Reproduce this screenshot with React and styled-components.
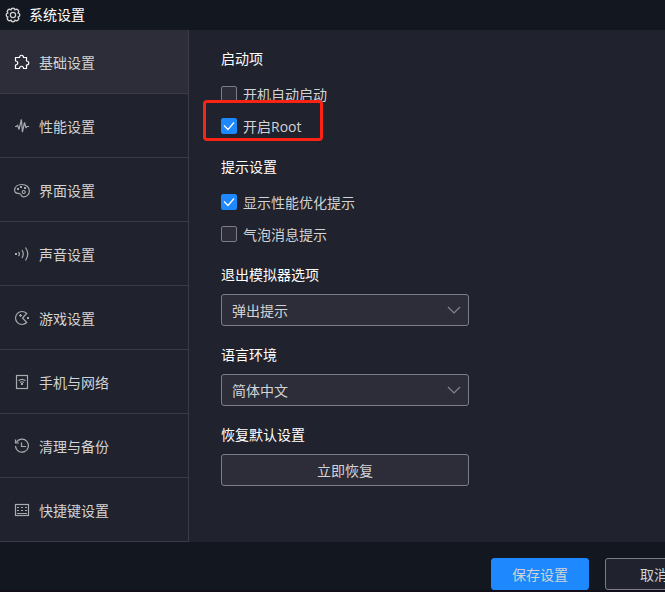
import styled, { createGlobalStyle } from "styled-components";
import { useState } from "react";

const GlobalStyle = createGlobalStyle`
  * {
    box-sizing: border-box;
  }
  body {
    margin: 0;
    background-color: #20222d;
    color: #d2d3d5;
    font-family: "Open Sans", "Noto Sans CJK SC", sans-serif;
    font-size: 14px;
    line-height: 20px;
  }
  button,
  select,
  input {
    margin: 0;
    font: inherit;
    color: inherit;
  }
`;

const Page = styled.div`
  display: flex;
  flex-direction: column;
  min-height: 100vh;
  overflow: hidden;
`;

const TitleBar = styled.header`
  display: flex;
  align-items: center;
  gap: 8px;
  height: 30px;
  padding: 0 5px 1px;
  background-color: #131720;
  color: #ffffff;
  h1 {
    margin: 0;
    font-size: 14px;
    font-weight: 400;
  }
`;

const Icon = styled.svg`
  flex: none;
  width: 16px;
  height: 16px;
  fill: none;
  stroke: ${(props) => props.$color || "#a9aaae"};
  stroke-width: 1.2;
  .solid {
    fill: ${(props) => props.$color || "#a9aaae"};
    stroke: none;
  }
`;

const Body = styled.div`
  display: flex;
  flex: 1;
`;

const Sidebar = styled.nav`
  flex: none;
  width: 189px;
  border-right: 1px solid #3a3b46;
`;

const NavItem = styled.button`
  display: flex;
  align-items: center;
  gap: 9px;
  width: 100%;
  height: 64px;
  padding: 1px 14px 0;
  border: none;
  border-bottom: 1px solid #3a3b46;
  background-color: ${(props) => (props.$active ? "#2c2d38" : "transparent")};
  text-align: left;
  cursor: pointer;
`;

const Label = styled.span`
  padding-top: 2px;
`;

const Content = styled.main`
  display: flex;
  flex: 1;
  flex-direction: column;
  align-items: flex-start;
  gap: 19px;
  padding: 19px 32px;
`;

const Group = styled.section`
  display: flex;
  flex-direction: column;
  gap: ${(props) => props.$gap || 9}px;
  width: 100%;
  max-width: 248px;
  h2 {
    margin: 0;
    color: #ffffff;
    font-size: 14px;
    font-weight: 400;
  }
`;

const CheckList = styled.div`
  display: flex;
  flex-direction: column;
  align-items: flex-start;
  gap: 8px;
`;

const CheckRow = styled.label`
  display: flex;
  align-items: center;
  gap: 6px;
  height: 24px;
  position: relative;
  cursor: pointer;
`;

const CheckBox = styled.span`
  display: grid;
  width: 16px;
  height: 16px;
  input,
  svg {
    grid-area: 1 / 1;
  }
  input {
    appearance: none;
    width: 16px;
    height: 16px;
    border: 1px solid #7c7d86;
    border-radius: 2px;
    background-color: #2c2d38;
  }
  input:checked {
    border-color: #1e88ff;
    background-color: #1e88ff;
  }
  svg {
    visibility: hidden;
    pointer-events: none;
  }
  input:checked + svg {
    visibility: visible;
  }
`;

const Marker = styled.span`
  position: absolute;
  top: -14px;
  left: -18px;
  width: 120px;
  height: 41px;
  border: 3px solid #fb2314;
  border-radius: 4px;
  pointer-events: none;
`;

const SelectBox = styled.div`
  display: grid;
  align-items: center;
  select,
  svg {
    grid-area: 1 / 1;
  }
  select {
    appearance: none;
    width: 100%;
    height: 32px;
    padding: 2px 10px 0;
    border: 1px solid #7c7d86;
    border-radius: 3px;
    background-color: #2c2d38;
  }
  svg {
    justify-self: end;
    margin-right: 7px;
    pointer-events: none;
  }
`;

const Button = styled.button`
  flex: none;
  width: ${(props) => props.$width || "100%"};
  height: 32px;
  padding: 2px 0 0;
  border: 1px solid ${(props) => (props.$primary ? "#1e88ff" : "#7c7d86")};
  border-radius: 3px;
  background-color: ${(props) => (props.$primary ? "#1e88ff" : props.$dark ? "#20222d" : "#2c2d38")};
  cursor: pointer;
`;

// the last button runs past the right edge of the window
const Footer = styled.footer`
  display: flex;
  justify-content: flex-end;
  gap: 16px;
  padding-top: 16px;
  margin-right: -38px;
  border-bottom: 2px solid #120e1a;
  background-color: #131720;
`;

const GearIcon = () => (
  <Icon viewBox="0 0 16 16" $color="#d2d3d5" aria-hidden="true">
    <path
      strokeWidth="1.4"
      d="M13.2 5.9A2.2 2.2 0 0 1 13.2 10.1A2.2 2.2 0 0 1 10.1 13.2A2.2 2.2 0 0 1 5.9 13.2A2.2 2.2 0 0 1 2.8 10.1A2.2 2.2 0 0 1 2.8 5.9A2.2 2.2 0 0 1 5.9 2.8A2.2 2.2 0 0 1 10.1 2.8A2.2 2.2 0 0 1 13.2 5.9Z"
    />
    <circle cx="8" cy="8" r="2.6" />
  </Icon>
);

const navItems = [
  {
    name: "基础设置",
    icon: (
      <path d="M1.5 3.5H5.5C5.5.5 9.5.5 9.5 3.5H12.5V7C15.5 7 15.5 11 12.5 11V14.5H9.5C9.5 11.5 5.5 11.5 5.5 14.5H1.5V11C4.5 11 4.5 7 1.5 7Z" />
    ),
  },
  {
    name: "性能设置",
    icon: (
      <path
        strokeLinejoin="bevel"
        d="M1 8.5h1.5L3.5 7 5 11.5 7.4 1.5 8.4 14 10.5 4.5 12 10 13 8.5H15"
      />
    ),
  },
  {
    name: "界面设置",
    icon: (
      <>
        <path d="M.6 8.5C.6 4.5 4 2.5 8 2.5S15.4 5 15.4 9s-3 5.8-6 5.8c-2.5 0-1.7-2.3-3.5-3S.7 12 .6 8.5Z" />
        <circle cx="9.7" cy="10" r="1.5" />
        <rect className="solid" x="3" y="6" width="2" height="2" />
        <rect className="solid" x="6" y="4" width="2" height="2" />
        <rect className="solid" x="10" y="5" width="2" height="2" />
      </>
    ),
  },
  {
    name: "声音设置",
    icon: (
      <>
        <rect className="solid" x="1" y="7" width="2" height="2" />
        <path d="M4.5 6q1.8 2 0 4M8 4q2.5 4 0 8M11.5 1.5q4.5 6.5 0 13" />
      </>
    ),
  },
  {
    name: "游戏设置",
    icon: (
      <>
        <path d="M12.7 3.5A6.5 6.5 0 1 0 12.7 12.5L8.5 8Z" />
        <path d="M6.5 4v3M5 5.5h3" />
        <rect className="solid" x="13" y="7" width="2" height="2" />
      </>
    ),
  },
  {
    name: "手机与网络",
    icon: (
      <>
        <rect x="2.5" y="1.5" width="11" height="13" />
        <path d="M4.5 6.8q3.5-2.8 7 0M6 8.5q2-1.5 4 0" />
        <rect className="solid" x="7" y="9" width="2" height="2" />
      </>
    ),
  },
  {
    name: "清理与备份",
    icon: (
      <>
        <path d="M2.3 4.5A6.5 6.5 0 1 1 1.5 8" />
        <path d="M1.5 1.5v3.5H5M7.5 4.5v4H12" />
      </>
    ),
  },
  {
    name: "快捷键设置",
    icon: (
      <>
        <rect x="1.5" y="2.5" width="13" height="11" />
        <path d="M3 5.5h2M7 5.5h2M11 5.5h2M3 8.5h2M7 8.5h2M11 8.5h2M3 11.5h10" />
      </>
    ),
  },
];

function Check({ label, checked, marked }) {
  return (
    <CheckRow>
      <CheckBox>
        <input type="checkbox" defaultChecked={checked} />
        <Icon viewBox="0 0 16 16" $color="#ffffff" aria-hidden="true">
          <path d="M3 7.5l4 4 6-7" />
        </Icon>
      </CheckBox>
      <Label>{label}</Label>
      {marked && <Marker />}
    </CheckRow>
  );
}

function Select({ label, options }) {
  return (
    <SelectBox>
      <select aria-label={label}>
        {options.map((option) => (
          <option key={option}>{option}</option>
        ))}
      </select>
      <Icon viewBox="0 0 16 16" $color="#85868c" aria-hidden="true">
        <path d="M2 5l6 6 6-6" />
      </Icon>
    </SelectBox>
  );
}

export default function App() {
  const [active, setActive] = useState("基础设置");

  return (
    <Page>
      <GlobalStyle />
      <TitleBar>
        <GearIcon />
        <h1>系统设置</h1>
      </TitleBar>
      <Body>
        <Sidebar>
          {navItems.map(({ name, icon }) => (
            <NavItem
              key={name}
              $active={name === active}
              onClick={() => setActive(name)}
            >
              <Icon
                viewBox="0 0 16 16"
                $color={name === active ? "#ffffff" : ""}
                aria-hidden="true"
              >
                {icon}
              </Icon>
              <Label>{name}</Label>
            </NavItem>
          ))}
        </Sidebar>
        <Content>
          <Group $gap={13}>
            <h2>启动项</h2>
            <CheckList>
              <Check label="开机自动启动" />
              <Check label="开启Root" checked marked />
            </CheckList>
          </Group>
          <Group $gap={13}>
            <h2>提示设置</h2>
            <CheckList>
              <Check label="显示性能优化提示" checked />
              <Check label="气泡消息提示" />
            </CheckList>
          </Group>
          <Group>
            <h2>退出模拟器选项</h2>
            <Select
              label="退出模拟器选项"
              options={["弹出提示", "直接退出"]}
            />
          </Group>
          <Group>
            <h2>语言环境</h2>
            <Select label="语言环境" options={["简体中文", "English"]} />
          </Group>
          <Group>
            <h2>恢复默认设置</h2>
            <Button>立即恢复</Button>
          </Group>
        </Content>
      </Body>
      <Footer>
        <Button $primary $width="98px">
          保存设置
        </Button>
        <Button $dark $width="98px">
          取消
        </Button>
      </Footer>
    </Page>
  );
}
